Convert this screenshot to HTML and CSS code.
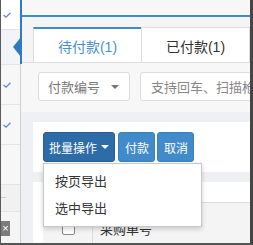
FILE: index.html
```html
<!DOCTYPE html>
<html lang="zh-CN">
<head>
<meta charset="utf-8">
<link rel="stylesheet" href="styles.css">
</head>
<body>
<div class="frame">
  <aside class="sidebar">
    <div class="srow r1"><svg class="chk" viewBox="0 0 8 6" width="8" height="6"><path d="M0.5 3 L3 5.2 L7.5 0.8" fill="none" stroke="#5a88c0" stroke-width="1.2"/></svg></div>
    <div class="srow r2 active"><span class="pointer"></span></div>
    <div class="srow r3"><svg class="chk" viewBox="0 0 8 6" width="8" height="6"><path d="M0.5 3 L3 5.2 L7.5 0.8" fill="none" stroke="#5a88c0" stroke-width="1.2"/></svg></div>
    <div class="srow r3"><svg class="chk" viewBox="0 0 8 6" width="8" height="6"><path d="M0.5 3 L3 5.2 L7.5 0.8" fill="none" stroke="#5a88c0" stroke-width="1.2"/></svg></div>
    <div class="srow r3"></div>
    <div class="srow r6"><span class="dash"></span></div>
    <div class="srow r7"><span class="closebox">×</span></div>
  </aside>
  <main class="main">
    <div class="topbar"></div>
    <div class="tabs-wrap">
      <div class="tabs">
        <div class="tab active">待付款(1)</div>
        <div class="tab">已付款(1)</div>
      </div>
    </div>
    <div class="filter">
      <div class="select"><span>付款编号</span><span class="caret"></span></div>
      <div class="input">支持回车、扫描枪扫描</div>
    </div>
    <section class="panel actions">
      <div class="btn dark">批量操作<span class="caret white"></span></div>
      <div class="btn">付款</div>
      <div class="btn">取消</div>
      <ul class="menu">
        <li>按页导出</li>
        <li>选中导出</li>
      </ul>
    </section>
    <section class="panel table">
      <div class="toolbar"></div>
      <div class="thead">
        <div class="cell check"><span class="box"></span></div>
        <div class="cell name">采购单号</div>
      </div>
    </section>
  </main>
</div>
</body>
</html>
```

FILE: styles.css
```css
* { box-sizing: border-box; }
html, body { margin: 0; padding: 0; }
body {
  font-family: "Liberation Sans", "Noto Sans CJK SC", sans-serif;
  font-size: 13px;
  color: #333;
  background: #fff;
}
.frame {
  width: 253px;
  height: 245px;
  display: flex;
  border-left: 1px solid #5a5a5a;
  border-right: 3px solid #454545;
  border-bottom: 2px solid #555;
  overflow: hidden;
}
.sidebar {
  width: 19px;
  flex: none;
  display: flex;
  flex-direction: column;
  background: #f6f6f6;
}
.srow {
  position: relative;
  border-bottom: 1px solid #e4e4e4;
  display: flex;
  align-items: center;
  padding-left: 2px;
  flex: none;
}
.r1 { height: 30px; background: #fff; }
.r2 { height: 35px; background: #f2f4f7; }
.r3 { height: 40px; background: #f7f7f7; }
.r6 { height: 27px; background: #f1f1f1; }
.r7 { flex: 1; background: #f5f5f5; border-bottom: 0; align-items: flex-start; padding: 9px 0 0 0; }
.chk { display: block; }
.pointer {
  position: absolute;
  right: -1px;
  top: 7px;
  width: 0; height: 0;
  border-top: 10px solid transparent;
  border-bottom: 10px solid transparent;
  border-right: 8px solid #2f7bc1;
}
.dash { display: block; width: 5px; height: 1px; background: #ccc; margin-left: -2px; margin-top: -2px; }
.closebox {
  display: block;
  width: 9px; height: 15px;
  background: #7b7b7b;
  color: #fff;
  font-size: 11px;
  line-height: 15px;
  text-align: center;
}
.main {
  flex: 1;
  position: relative;
  border-left: 1px solid #cfcfcf;
  background: #eef0f4;
  display: flex;
  flex-direction: column;
  min-width: 0;
}
.main::before {
  content: "";
  position: absolute;
  left: -1px; top: 0;
  width: 2px; height: 64px;
  background: #2f7bc1;
}
.topbar {
  height: 17px;
  background: #f7f7f7;
  border-bottom: 2px solid #3d8bd0;
}
.tabs-wrap {
  background: #f4f4f4;
  padding: 10px 0 0 12px;
  border-bottom: 1px solid #dcdcdc;
}
.tabs { display: flex; }
.tab {
  height: 35px;
  width: 108px;
  background: #fff;
  border-top: 1px solid #ddd;
  border-left: 1px solid #ddd;
  display: flex;
  align-items: center;
  justify-content: center;
  font-size: 14px;
  color: #333;
  padding-top: 1px;
  white-space: nowrap;
}
.tab.active {
  border-top: 2px solid #3c8dca;
  color: #4a8fcf;
  padding-top: 0;
}
.tab + .tab { width: 109px; border-right: 1px solid #ddd; }
.filter {
  height: 49px;
  background: #f7f7f7;
  padding: 9px 0 0 17px;
  display: flex;
  gap: 10px;
}
.select, .input {
  height: 29px;
  border: 1px solid #dcdcdc;
  border-radius: 3px;
  background: #fff;
  display: flex;
  align-items: center;
  color: #777;
  font-size: 13px;
  flex: none;
  white-space: nowrap;
}
.select {
  width: 92px;
  padding: 0 10px 0 9px;
  justify-content: space-between;
}
.input {
  width: 160px;
  padding-left: 10px;
  overflow: hidden;
  color: #888;
}
.caret {
  display: inline-block;
  width: 0; height: 0;
  border-left: 4px solid transparent;
  border-right: 4px solid transparent;
  border-top: 4px solid #777;
}
.caret.white { border-top-color: #fff; margin-left: 4px; }
.panel {
  margin-left: 12px;
  background: #fff;
}
.actions {
  position: relative;
  margin-top: 10px;
  height: 50px;
  padding: 10px 10px;
  display: flex;
  gap: 2px;
}
.btn {
  height: 30px;
  padding: 0 5px 0 6px;
  background: #428bca;
  border: 1px solid #3a80bd;
  border-radius: 3px;
  color: #fff;
  font-size: 12px;
  display: flex;
  align-items: center;
  white-space: nowrap;
  flex: none;
}
.btn.dark {
  background: #2d6ca6;
  border-color: #275f93;
  padding: 0 5px 0 5px;
  margin-right: 1px;
}
.menu {
  position: absolute;
  left: 10px;
  top: 41px;
  width: 159px;
  margin: 0;
  padding: 4px 0;
  list-style: none;
  background: #fff;
  border: 1px solid #c8c8c8;
  box-shadow: 0 2px 5px rgba(0,0,0,0.18);
  z-index: 5;
}
.menu li {
  height: 27px;
  line-height: 27px;
  padding-left: 11px;
  font-size: 13px;
  color: #333;
  white-space: nowrap;
}
.table {
  margin-top: 10px;
  flex: 1;
  display: flex;
  flex-direction: column;
}
.toolbar { height: 20px; }
.thead {
  flex: 1;
  margin-left: 10px;
  background: #f4f4f4;
  border-top: 1px solid #dcdcdc;
  display: flex;
  align-items: flex-start;
  padding-top: 10px;
}
.cell {
  height: 30px;
  display: flex;
  align-items: center;
}
.cell.check {
  width: 50px;
  padding-left: 19px;
  border-right: 1px solid #ddd;
}
.box {
  width: 13px; height: 13px;
  border: 1px solid #888;
  border-radius: 2px;
  background: #fff;
}
.cell.name { padding-left: 7px; font-size: 13px; color: #333; white-space: nowrap; }
```
